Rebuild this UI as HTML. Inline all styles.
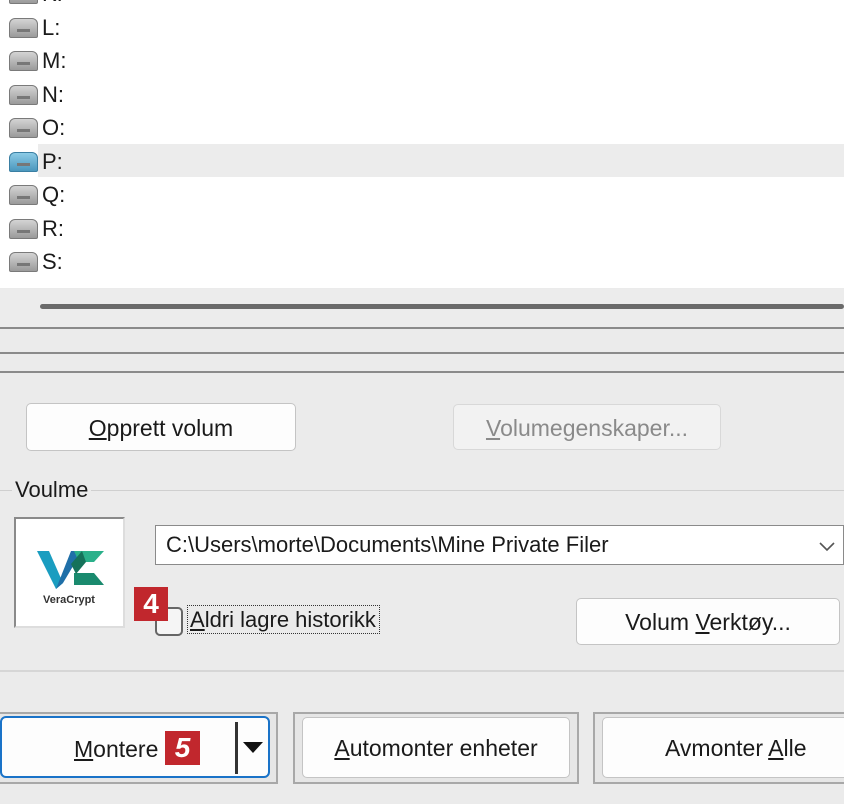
<!DOCTYPE html>
<html><head><meta charset="utf-8"><style>
*{margin:0;padding:0;box-sizing:border-box}
body{width:844px;height:804px;overflow:hidden;background:#ebebeb;font-family:"Liberation Sans",sans-serif;color:#1a1a1a;position:relative}
.a{position:absolute}
.row{position:absolute;left:0;width:844px;height:33px;font-size:22px;line-height:33px}
.row .ic{position:absolute;left:9px;top:7px;width:29px;height:20px;border-radius:6px 6px 2px 2px;background:linear-gradient(#d4d4d4,#9a9a9a);border:1px solid #7a7a7a}
.row .ic:after{content:"";position:absolute;left:7px;top:10px;width:13px;height:3px;background:#777}
.row span{position:absolute;left:42px}
.btn{position:absolute;background:#fdfdfd;border:1px solid #c4c4c4;border-radius:5px;font-size:23px;text-align:center}
u{text-decoration:underline}
.badge{position:absolute;background:#c1272d;color:#fff;font-weight:bold;font-size:28px;text-align:center;line-height:34px}
</style></head><body>
<div class="a" style="left:0;top:0;width:844px;height:288px;background:#fff"></div>
<div class="a" style="left:38px;top:144px;width:806px;height:33px;background:#ececec"></div>
<div class="row" style="top:-23px"><div class="ic"></div><span>K:</span></div>
<div class="row" style="top:11px"><div class="ic"></div><span>L:</span></div>
<div class="row" style="top:44px"><div class="ic"></div><span>M:</span></div>
<div class="row" style="top:78px"><div class="ic"></div><span>N:</span></div>
<div class="row" style="top:111px"><div class="ic"></div><span>O:</span></div>
<div class="row" style="top:145px"><div class="ic" style="background:linear-gradient(#8ccbe6,#4b97bd);border-color:#3a7fa3"></div><span>P:</span></div>
<div class="row" style="top:178px"><div class="ic"></div><span>Q:</span></div>
<div class="row" style="top:212px"><div class="ic"></div><span>R:</span></div>
<div class="row" style="top:245px"><div class="ic"></div><span>S:</span></div>
<div class="a" style="left:0;top:289px;width:844px;height:38px;background:#ececec"></div>
<div class="a" style="left:40px;top:304px;width:804px;height:5px;background:#6a6a6a;border-radius:3px"></div>
<div class="a" style="left:0;top:327px;width:844px;height:2px;background:#8a8a8a"></div>
<div class="a" style="left:0;top:352px;width:844px;height:2px;background:#8a8a8a"></div>
<div class="a" style="left:0;top:371px;width:844px;height:2px;background:#8a8a8a"></div>
<div class="btn" style="left:26px;top:403px;width:270px;height:48px;line-height:48px"><u>O</u>pprett volum</div>
<div class="btn" style="left:453px;top:404px;width:268px;height:46px;line-height:46px;background:#f2f2f2;border-color:#d8d8d8;color:#8a8a8a"><u>V</u>olumegenskaper...</div>
<div class="a" style="left:0;top:490px;width:844px;height:1px;background:#cfcfcf"></div>
<div class="a" style="left:12px;top:477px;padding:0 3px;background:#ebebeb;font-size:22px">Voulme</div>
<div class="a" style="left:14px;top:517px;width:111px;height:111px;background:#fff;border:2px solid #8a8a8a;border-right-color:#ddd;border-bottom-color:#ddd">
<svg width="107" height="107" viewBox="0 0 107 107" style="position:absolute;left:0;top:0">
<polygon points="21,32 33,32 47,64 40,70" fill="#1a9dc0"/>
<polygon points="40,70 47,64 66,32 55,32" fill="#1f6fa8"/>
<polygon points="58,32 88,32 78,43 63,43" fill="#2ab08a"/>
<polygon points="58,54 78,54 88,66 58,66" fill="#1a8a6e"/>
<polygon points="55,45 66,32 70,43 60,55" fill="#15725a"/>
<text x="53" y="84" text-anchor="middle" font-family="Liberation Sans" font-weight="bold" font-size="11" fill="#333">VeraCrypt</text>
</svg></div>
<div class="a" style="left:155px;top:525px;width:689px;height:40px;background:#fff;border:1px solid #8a8a8a;font-size:22px;line-height:38px;padding-left:10px">C:\Users\morte\Documents\Mine Private Filer</div>
<svg class="a" style="left:818px;top:540px" width="18" height="12"><path d="M2 3 L9 10 L16 3" stroke="#555" stroke-width="1.6" fill="none"/></svg>
<div class="a" style="left:155px;top:607px;width:28px;height:29px;border:2px solid #666;border-radius:5px;background:#f5f5f5"></div>
<div class="a" style="left:187px;top:605px;width:193px;height:29px;border:1px dotted #333;font-size:22px;line-height:27px;padding-left:2px;white-space:nowrap"><u>A</u>ldri lagre historikk</div>
<div class="badge" style="left:134px;top:587px;width:34px;height:34px">4</div>
<div class="btn" style="left:576px;top:598px;width:264px;height:47px;line-height:47px">Volum <u>V</u>erktøy...</div>
<div class="a" style="left:0;top:670px;width:844px;height:2px;background:#d6d6d6"></div>
<div class="a" style="left:-2px;top:712px;width:280px;height:72px;border:2px solid #a8a8a8;background:#e6e6e6"></div>
<div class="btn" style="left:0;top:716px;width:270px;height:62px;border:2px solid #1a73c8;border-radius:6px;line-height:62px;text-align:left;padding-left:72px"><u>M</u>ontere</div>
<div class="badge" style="left:165px;top:731px;width:35px;height:34px;font-style:italic">5</div>
<div class="a" style="left:235px;top:722px;width:3px;height:52px;background:#333"></div>
<svg class="a" style="left:243px;top:742px" width="20" height="12"><path d="M0 0 L20 0 L10 11 Z" fill="#111"/></svg>
<div class="a" style="left:293px;top:712px;width:286px;height:72px;border:2px solid #a8a8a8;background:#e6e6e6"></div>
<div class="btn" style="left:302px;top:717px;width:268px;height:61px;line-height:61px"><u>A</u>utomonter enheter</div>
<div class="a" style="left:593px;top:712px;width:260px;height:72px;border:2px solid #a8a8a8;background:#e6e6e6"></div>
<div class="btn" style="left:602px;top:717px;width:250px;height:61px;line-height:61px;text-align:left;padding-left:62px">Avmonter <u>A</u>lle</div>
</body></html>
